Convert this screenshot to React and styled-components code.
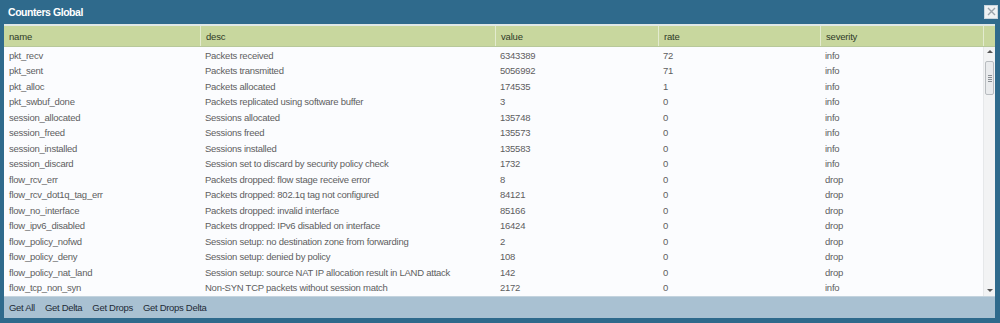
import React from "react";
import styled, { createGlobalStyle } from "styled-components";

const Global = createGlobalStyle`
  html, body { margin: 0; padding: 0; background: #2f6a8c; }
  body { font-family: "Liberation Sans", Arial, sans-serif; }
`;

const Window = styled.div`
  width: 1000px;
  height: 323px;
  display: flex;
  flex-direction: column;
  background: #2f6a8c;
  box-sizing: border-box;
  padding: 0 5px 5px 4px;
  overflow: hidden;
`;

const TitleBar = styled.div`
  height: 24px;
  flex: none;
  display: flex;
  align-items: center;
  justify-content: space-between;
  padding: 0 0 0 4px;
  margin-right: -3px;
`;

const Title = styled.span`
  color: #ffffff;
  font-weight: bold;
  font-size: 10.5px;
  letter-spacing: -0.45px;
`;

const CloseBtn = styled.div`
  width: 12px;
  height: 12px;
  background: #eef2f4;
  border: 1px solid #c9d6de;
  display: flex;
  align-items: center;
  justify-content: center;
  margin-top: -1px;
`;

const Panel = styled.div`
  flex: 1;
  display: flex;
  flex-direction: column;
  background: #fbfcfe;
  border-top: 2px solid #dfe8e6;
  min-height: 0;
`;

const COLS = "196px 295px 163px 162px 163px 12px";

const HeaderRow = styled.div`
  display: grid;
  grid-template-columns: ${COLS};
  height: 20px;
  flex: none;
  background: #c8d79e;
  border-bottom: 1px solid #b7c89a;
`;

const HeadCell = styled.div`
  display: flex;
  align-items: center;
  padding-left: 5px;
  font-size: 9.5px;
  letter-spacing: -0.2px;
  color: #2e3a28;
  border-left: ${(p) => (p.$first ? "none" : "1px solid #e3ebcf")};
`;

const Body = styled.div`
  flex: 1;
  display: flex;
  min-height: 0;
`;

const Rows = styled.div`
  flex: 1;
  padding-top: 0.5px;
`;

const Row = styled.div`
  display: grid;
  grid-template-columns: 196px 295px 163px 162px 163px;
  height: 15.5px;
`;

const Cell = styled.div`
  padding-left: 5px;
  font-size: 9.5px;
  letter-spacing: -0.25px;
  line-height: 15.5px;
  color: #5e5e5e;
  white-space: nowrap;
  overflow: hidden;
`;

const Scrollbar = styled.div`
  width: 12px;
  flex: none;
  background: #f2f3f4;
  border-left: 1px solid #e6e8ea;
  display: flex;
  flex-direction: column;
  align-items: center;
  justify-content: space-between;
  padding: 3px 0 4px;
  box-sizing: border-box;
  position: relative;
`;

const Thumb = styled.div`
  position: absolute;
  top: 14px;
  left: 1px;
  width: 9px;
  height: 34px;
  background: #e9ebed;
  border: 1px solid #b8bcc0;
  border-radius: 2px;
  box-sizing: border-box;
  display: flex;
  flex-direction: column;
  align-items: center;
  justify-content: center;
  gap: 1px;
`;

const Grip = styled.span`
  width: 4px;
  height: 1px;
  background: #8a8f94;
`;

const Arrow = styled.span`
  width: 0;
  height: 0;
  border-left: 3px solid transparent;
  border-right: 3px solid transparent;
  ${(p) =>
    p.$up
      ? "border-bottom: 3px solid #555;"
      : "border-top: 3px solid #555;"}
`;

const Footer = styled.div`
  height: 21px;
  flex: none;
  background: #a9c1d2;
  border-top: 1px solid #c3d3de;
  display: flex;
  align-items: center;
  gap: 10px;
  padding-left: 5px;
`;

const FooterBtn = styled.span`
  font-size: 9.5px;
  letter-spacing: -0.3px;
  color: #1d2a36;
`;

const data = [
  ["pkt_recv", "Packets received", "6343389", "72", "info"],
  ["pkt_sent", "Packets transmitted", "5056992", "71", "info"],
  ["pkt_alloc", "Packets allocated", "174535", "1", "info"],
  ["pkt_swbuf_done", "Packets replicated using software buffer", "3", "0", "info"],
  ["session_allocated", "Sessions allocated", "135748", "0", "info"],
  ["session_freed", "Sessions freed", "135573", "0", "info"],
  ["session_installed", "Sessions installed", "135583", "0", "info"],
  ["session_discard", "Session set to discard by security policy check", "1732", "0", "info"],
  ["flow_rcv_err", "Packets dropped: flow stage receive error", "8", "0", "drop"],
  ["flow_rcv_dot1q_tag_err", "Packets dropped: 802.1q tag not configured", "84121", "0", "drop"],
  ["flow_no_interface", "Packets dropped: invalid interface", "85166", "0", "drop"],
  ["flow_ipv6_disabled", "Packets dropped: IPv6 disabled on interface", "16424", "0", "drop"],
  ["flow_policy_nofwd", "Session setup: no destination zone from forwarding", "2", "0", "drop"],
  ["flow_policy_deny", "Session setup: denied by policy", "108", "0", "drop"],
  ["flow_policy_nat_land", "Session setup: source NAT IP allocation result in LAND attack", "142", "0", "drop"],
  ["flow_tcp_non_syn", "Non-SYN TCP packets without session match", "2172", "0", "info"],
];

const headers = ["name", "desc", "value", "rate", "severity"];

export default function App() {
  return (
    <>
      <Global />
      <Window>
        <TitleBar>
          <Title>Counters Global</Title>
          <CloseBtn>
            <svg width="9" height="9" viewBox="0 0 9 9">
              <path d="M1 1 L8 8 M8 1 L1 8" stroke="#9aa4ab" strokeWidth="1.4" />
            </svg>
          </CloseBtn>
        </TitleBar>
        <Panel>
          <HeaderRow>
            {headers.map((h, i) => (
              <HeadCell key={h} $first={i === 0}>{h}</HeadCell>
            ))}
            <HeadCell />
          </HeaderRow>
          <Body>
            <Rows>
              {data.map((r) => (
                <Row key={r[0]}>
                  {r.map((c, i) => (
                    <Cell key={i}>{c}</Cell>
                  ))}
                </Row>
              ))}
            </Rows>
            <Scrollbar>
              <Arrow $up />
              <Thumb>
                <Grip />
                <Grip />
                <Grip />
                <Grip />
              </Thumb>
              <Arrow />
            </Scrollbar>
          </Body>
          <Footer>
            <FooterBtn>Get All</FooterBtn>
            <FooterBtn>Get Delta</FooterBtn>
            <FooterBtn>Get Drops</FooterBtn>
            <FooterBtn>Get Drops Delta</FooterBtn>
          </Footer>
        </Panel>
      </Window>
    </>
  );
}
